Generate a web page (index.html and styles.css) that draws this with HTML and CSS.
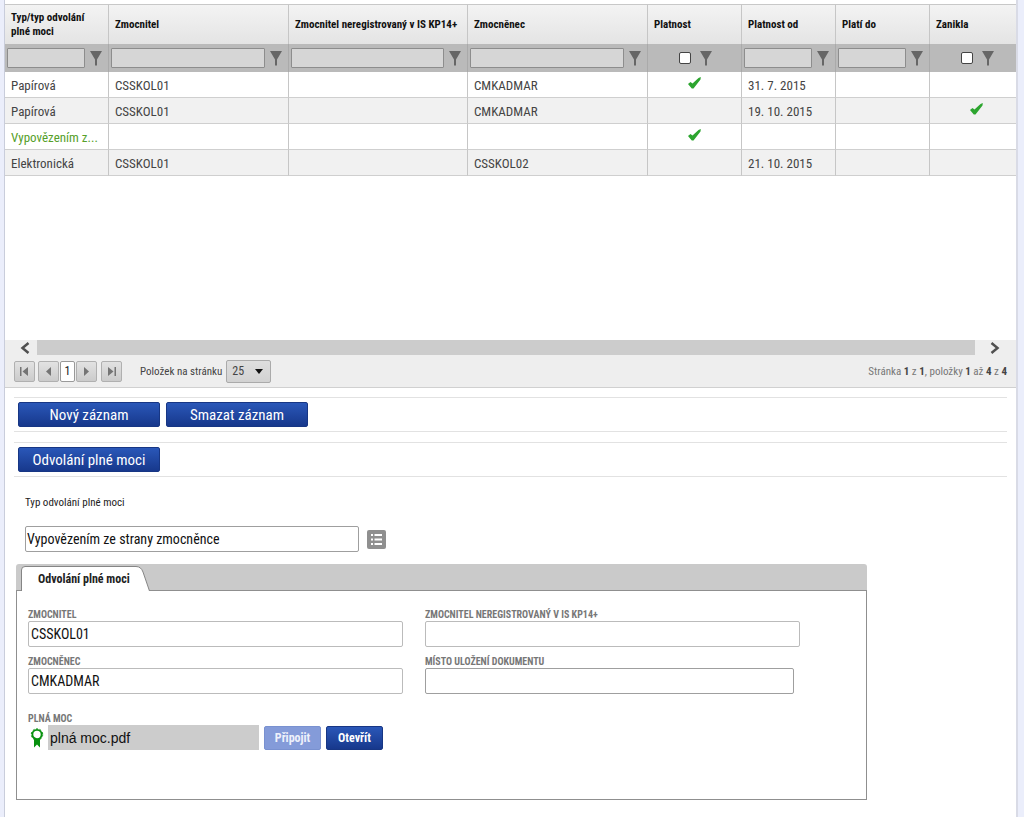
FILE: index.html
```html
<!DOCTYPE html>
<html lang="cs">
<head>
<meta charset="utf-8">
<title>Plné moci</title>
<link rel="stylesheet" href="styles.css">
</head>
<body>
<svg class="defs" aria-hidden="true">
  <symbol id="funnel" viewBox="0 0 12 15"><path fill="#666" d="M0 0h12L7 8.500V14.500H5V8.500z"/></symbol>
  <symbol id="tick" viewBox="0 0 13 12"><path fill="#2ca52f" d="M0 7 2.500 5l2 1.500L10.500 1 12.800 0 12.500 2.500 5.500 11.500H3.800z"/></symbol>
</svg>
<main class="page">
  <section class="grid">
    <div class="grid-body">
    <table class="records">
      <colgroup>
        <col class="c-type"><col class="c-name"><col class="c-mid"><col class="c-name">
        <col class="c-flag"><col class="c-flag"><col class="c-flag"><col class="c-last">
      </colgroup>
      <thead>
        <tr class="titles">
          <th>Typ/typ odvolání plné moci</th><th>Zmocnitel</th><th class="nowrap">Zmocnitel neregistrovaný v IS KP14+</th><th>Zmocněnec</th>
          <th>Platnost</th><th>Platnost od</th><th>Platí do</th><th>Zanikla</th>
        </tr>
        <tr class="filters">
          <td><div class="filter"><input type="text" aria-label="Filtr: Typ"><button type="button" aria-label="Filtrovat"><svg><use href="#funnel"/></svg></button></div></td>
          <td><div class="filter"><input type="text" aria-label="Filtr: Zmocnitel"><button type="button" aria-label="Filtrovat"><svg><use href="#funnel"/></svg></button></div></td>
          <td><div class="filter"><input type="text" aria-label="Filtr: Zmocnitel neregistrovaný"><button type="button" aria-label="Filtrovat"><svg><use href="#funnel"/></svg></button></div></td>
          <td><div class="filter"><input type="text" aria-label="Filtr: Zmocněnec"><button type="button" aria-label="Filtrovat"><svg><use href="#funnel"/></svg></button></div></td>
          <td><div class="filter check"><input type="checkbox" aria-label="Filtr: Platnost"><button type="button" aria-label="Filtrovat"><svg><use href="#funnel"/></svg></button></div></td>
          <td><div class="filter"><input type="text" aria-label="Filtr: Platnost od"><button type="button" aria-label="Filtrovat"><svg><use href="#funnel"/></svg></button></div></td>
          <td><div class="filter"><input type="text" aria-label="Filtr: Platí do"><button type="button" aria-label="Filtrovat"><svg><use href="#funnel"/></svg></button></div></td>
          <td><div class="filter check"><input type="checkbox" aria-label="Filtr: Zanikla"><button type="button" aria-label="Filtrovat"><svg><use href="#funnel"/></svg></button></div></td>
        </tr>
      </thead>
      <tbody>
        <tr><td>Papírová</td><td>CSSKOL01</td><td></td><td>CMKADMAR</td><td class="flag"><svg><use href="#tick"/></svg></td><td>31. 7. 2015</td><td></td><td></td></tr>
        <tr><td>Papírová</td><td>CSSKOL01</td><td></td><td>CMKADMAR</td><td></td><td>19. 10. 2015</td><td></td><td class="flag"><svg><use href="#tick"/></svg></td></tr>
        <tr class="selected"><td>Vypovězením z...</td><td></td><td></td><td></td><td class="flag"><svg><use href="#tick"/></svg></td><td></td><td></td><td></td></tr>
        <tr><td>Elektronická</td><td>CSSKOL01</td><td></td><td>CSSKOL02</td><td></td><td>21. 10. 2015</td><td></td><td></td></tr>
      </tbody>
    </table>
    </div>
    <div class="grid-foot">
      <div class="scroll">
        <button type="button" aria-label="Doleva"><svg viewBox="0 0 10 12"><path d="M8.500 1 2.500 6l6 5" fill="none" stroke="#505050" stroke-width="2.500"/></svg></button>
        <div class="thumb"></div>
        <button type="button" aria-label="Doprava"><svg viewBox="0 0 10 12"><path d="M1.500 1l6 5-6 5" fill="none" stroke="#505050" stroke-width="2.500"/></svg></button>
      </div>
      <div class="pager">
        <div class="pages">
          <button type="button" class="pg first" aria-label="První"><svg viewBox="0 0 9 9"><path fill="#747474" d="M0 0h1.500v9H0zM8 0v9L2.500 4.500z"/></svg></button>
          <button type="button" class="pg" aria-label="Předchozí"><svg viewBox="0 0 9 9"><path fill="#747474" d="M7 0v9L2 4.500z"/></svg></button>
          <button type="button" class="current">1</button>
          <button type="button" class="pg" aria-label="Další"><svg viewBox="0 0 9 9"><path fill="#747474" d="M2 0v9l5-4.500z"/></svg></button>
          <button type="button" class="pg last" aria-label="Poslední"><svg viewBox="0 0 9 9"><path fill="#747474" d="M7.500 0H9v9H7.500zM1 0v9l5.500-4.500z"/></svg></button>
        </div>
        <label for="size">Položek na stránku</label>
        <span class="select"><select id="size"><option>25</option></select><svg viewBox="0 0 8 5"><path fill="#111" d="M0 0h8L4 5z"/></svg></span>
        <p class="info">Stránka <b>1</b> z <b>1</b>, položky <b>1</b> až <b>4</b> z <b>4</b></p>
      </div>
    </div>
  </section>

  <div class="actions">
    <button type="button" class="btn wide">Nový záznam</button>
    <button type="button" class="btn wide">Smazat záznam</button>
  </div>
  <div class="actions">
    <button type="button" class="btn wide">Odvolání plné moci</button>
  </div>

  <div class="type-field">
    <label for="kind">Typ odvolání plné moci</label>
    <div class="type-row">
      <input id="kind" class="box strong" type="text" value="Vypovězením ze strany zmocněnce">
      <button type="button" class="pick" aria-label="Vybrat ze seznamu"><svg viewBox="0 0 11 11"><path fill="#fff" d="M0 0h2v2H0zM3.500 0H11v2H3.500zM0 4.500h2v2H0zM3.500 4.500H11v2H3.500zM0 9h2v2H0zM3.500 9H11v2H3.500z"/></svg></button>
    </div>
  </div>

  <section class="panel">
    <div class="tabs">
      <button type="button" class="tab"><svg viewBox="0 0 130 27" aria-hidden="true"><path d="M.5 27V6Q.5 2.500 4 2.500H115Q120 2.500 122 8L128.500 27" fill="#fff" stroke="#858585"/></svg><span>Odvolání plné moci</span></button>
    </div>
    <div class="panel-body">
      <div class="fields">
        <div class="field"><label for="f1">ZMOCNITEL</label><input id="f1" class="box" type="text" value="CSSKOL01"></div>
        <div class="field"><label for="f2">ZMOCNITEL NEREGISTROVANÝ V IS KP14+</label><input id="f2" class="box" type="text"></div>
        <div class="field"><label for="f3">ZMOCNĚNEC</label><input id="f3" class="box" type="text" value="CMKADMAR"></div>
        <div class="field short"><label for="f4">MÍSTO ULOŽENÍ DOKUMENTU</label><input id="f4" class="box strong" type="text"></div>
      </div>
      <div class="field file">
        <label for="f5">PLNÁ MOC</label>
        <div class="file-row">
          <svg class="seal" viewBox="0 0 14 20"><path fill="#07910f" d="M4 10h6v9.500L7 16.500 4 19.500z"/><circle cx="7" cy="6.500" r="4.600" fill="#fff" stroke="#07910f" stroke-width="1.800"/><circle cx="7" cy="6.500" r="5.700" fill="none" stroke="#07910f" stroke-width="1" stroke-dasharray="2 1.600"/></svg>
          <input id="f5" type="text" value="plná moc.pdf" readonly>
          <button type="button" class="btn small" disabled>Připojit</button>
          <button type="button" class="btn small">Otevřít</button>
        </div>
      </div>
    </div>
  </section>
</main>
</body>
</html>
```
FILE: styles.css
```css
* { box-sizing: border-box; }
body {
  margin: 0;
  background: #ebeefb;
  font-family: "Roboto Condensed", "Liberation Sans Narrow", Roboto, sans-serif;
  font-size: 13px;
  color: #444;
}
button, input, select { font: inherit; color: inherit; margin: 0; padding: 0; }
button { border: 0; background: none; }
svg { display: block; }
p { margin: 0; }
.defs { position: absolute; width: 0; height: 0; }
.page {
  margin: 0 6px 0 4px;
  padding-top: 4px;
  min-height: 100vh;
  background: #fff;
  border-left: 1px solid #c9cddb;
  border-right: 2px solid #d9dbe6;
}

/* grid */
.grid-body { min-height: 336px; }
.records { width: 100%; table-layout: fixed; border-collapse: separate; border-spacing: 0; }
.c-type { width: 104px; }
.c-name { width: 180px; }
.c-mid { width: 179px; }
.c-flag { width: 94px; }
.c-last { width: 86px; }
.records th, .records td { border-right: 1px solid #c6c6c6; }
.records tr > :last-child { border-right: 0; }
.titles th {
  height: 40px;
  padding: 0 6px;
  border-top: 1px solid #c8c8c8;
  background: linear-gradient(#f3f3f3, #e4e4e4);
  background-clip: padding-box;
  color: #111;
  font-size: 11px;
  line-height: 14px;
  font-weight: 700;
  text-align: left;
}
.nowrap { white-space: nowrap; }
.filters td { height: 28px; padding: 0; background: #bababa; border-right-color: #aaa; }
.filter { display: flex; align-items: center; gap: 5px; padding: 0 6px 0 2px; }
.filter input[type=text] {
  flex: 1;
  min-width: 0;
  height: 20px;
  border: 1px solid #8d8d8d;
  border-radius: 1px;
  background: #d6d6d6;
}
.filter svg { width: 12px; height: 15px; }
.filter.check { padding-left: 31px; gap: 9px; }
.filter input[type=checkbox] {
  appearance: none;
  width: 12px;
  height: 12px;
  border: 1px solid #444;
  border-radius: 2px;
  background: #fff;
}
.records tbody td {
  height: 26px;
  padding: 2px 6px 0;
  border-bottom: 1px solid #cfcfcf;
  line-height: 18px;
  white-space: nowrap;
}
.records tbody tr:nth-child(even) { background: #f1f1f1; }
.records .selected td { color: #56a02a; }
.records tbody .flag { padding: 0 0 3px 40px; }
.flag svg { width: 13px; height: 12px; }

.grid-foot { background: #eee; border-bottom: 1px solid #d0d0d0; }
.scroll { display: flex; height: 15px; }
.scroll button { display: flex; align-items: center; width: 32px; padding-left: 15px; }
.scroll button:last-child { width: 41px; }
.scroll svg { width: 10px; height: 12px; }
.thumb { flex: 1; background: #ccc; }
.pager { display: flex; align-items: center; height: 32px; padding: 0 9px; font-size: 11px; }
.pages { display: flex; gap: 1px; margin-right: 18px; font-size: 12px; }
.pg {
  display: flex;
  align-items: center;
  justify-content: center;
  width: 21px;
  height: 21px;
  border: 1px solid #b0b0b0;
  border-radius: 2px;
  background: linear-gradient(#e2e2e2, #cbcbcb);
}
.pg svg { width: 9px; height: 9px; }
.first { margin-right: 2px; }
.last { margin-left: 3px; }
.current { width: 15px; height: 21px; border: 1px solid #999; border-radius: 2px; background: #fff; color: #222; }
.select { position: relative; margin-left: 4px; font-size: 12px; }
.select select {
  display: block;
  appearance: none;
  width: 45px;
  height: 23px;
  padding: 0 5px;
  border: 1px solid #aaa;
  border-radius: 2px;
  background: linear-gradient(#dedede, #d2d2d2);
}
.select svg { position: absolute; right: 8px; top: 9px; width: 8px; height: 5px; pointer-events: none; }
.info { margin-left: auto; color: #777; }
.info b { color: #444; }

/* actions */
.actions {
  display: flex;
  gap: 6px;
  margin: 9px 9px 0;
  padding: 4px;
  border-top: 1px solid #e2e2e2;
  border-bottom: 1px solid #e2e2e2;
}
.actions + .actions { margin-top: 10px; }
.btn {
  height: 25px;
  border: 1px solid #173684;
  border-radius: 2px;
  background: linear-gradient(#2a57b8, #17388c);
  color: #fff;
}
.wide { width: 142px; font-size: 15px; }
.small { width: 57px; height: 24px; font-size: 12px; font-weight: 700; }
.btn:disabled { background: #849bd9; border-color: #7991d0; color: #eef1fb; }

/* form */
.box {
  width: 100%;
  height: 26px;
  padding: 0 2px;
  border: 1px solid #bbb;
  border-radius: 2px;
  background: #fff;
  color: #111;
  font-size: 14px;
}
.box.strong { border-color: #9f9f9f; }
.type-field { padding: 18px 20px 12px; color: #222; font-size: 11px; line-height: 16px; }
.type-field label { display: block; margin-bottom: 15px; }
.type-row { display: flex; align-items: center; gap: 8px; }
.type-row .box { width: 334px; padding: 0 1px; }
.pick { display: flex; align-items: center; justify-content: center; width: 19px; height: 19px; border-radius: 2px; background: #8f8f8f; }
.pick svg { width: 11px; height: 11px; }
.panel { max-width: 851px; margin-left: 11px; }
.tabs { height: 26px; padding-left: 5px; border-radius: 3px 3px 0 0; background: #cacaca; }
.tab { position: relative; display: block; width: 130px; height: 27px; padding: 3px 0 0 17px; color: #222; font-size: 12px; line-height: 24px; font-weight: 700; text-align: left; }
.tab svg { position: absolute; left: 0; top: 0; width: 130px; height: 27px; }
.tab span { position: relative; }
.panel-body { min-height: 210px; padding: 17px 11px; border: 1px solid #8f8f8f; }
.fields { display: grid; grid-template-columns: 375px 375px; gap: 8px 22px; }
.field label { display: block; color: #777; font-size: 10px; font-weight: 700; line-height: 13px; }
.short .box { width: 369px; }
.file { margin-top: 18px; }
.file-row { display: flex; align-items: center; gap: 5px; }
.file-row .seal { width: 14px; height: 20px; margin-left: 2px; }
.file-row input {
  width: 211px;
  height: 25px;
  margin-left: -1px;
  padding: 0 2px;
  border: 0;
  background: #ccc;
  color: #111;
  font-family: "Liberation Sans", sans-serif;
  font-size: 14px;
}
```
